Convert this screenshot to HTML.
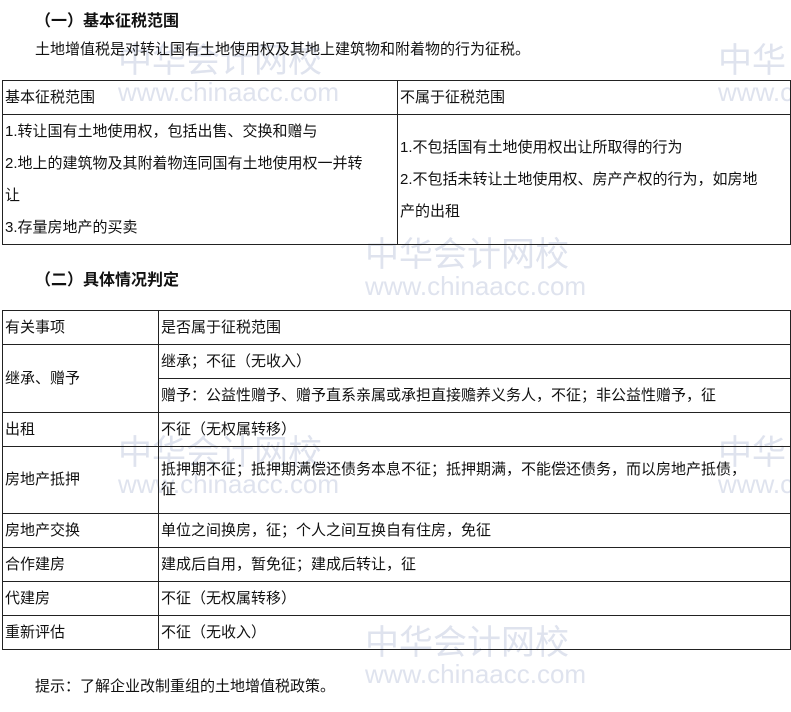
<!DOCTYPE html>
<html><head><meta charset="utf-8"><style>
body{margin:0;width:791px;height:712px;background:#fff;font-family:"Liberation Sans","Noto Sans CJK SC",sans-serif;font-size:15px;color:#111;position:relative;overflow:hidden}
.a{position:absolute;white-space:nowrap}
.wm{position:absolute;color:#dfe3ee;font-size:34px;white-space:nowrap;line-height:1}
.wm2{position:absolute;color:#dfe3ee;font-size:26px;white-space:nowrap;line-height:1}
table{position:absolute;border-collapse:collapse;left:2px}
td{border:1px solid #222;padding:0 2px;vertical-align:middle;line-height:20px;background:transparent}
</style></head><body>
<div class="wm" style="left:118px;top:44px">中华会计网校</div><div class="wm2" style="left:118px;top:79px">www.chinaacc.com</div>
<div class="wm" style="left:718px;top:44px">中华</div><div class="wm2" style="left:718px;top:79px">www.c</div>
<div class="wm" style="left:365px;top:238px">中华会计网校</div><div class="wm2" style="left:365px;top:273px">www.chinaacc.com</div>
<div class="wm" style="left:118px;top:436px">中华会计网校</div><div class="wm2" style="left:118px;top:471px">www.chinaacc.com</div>
<div class="wm" style="left:718px;top:436px">中华</div><div class="wm2" style="left:718px;top:471px">www.c</div>
<div class="wm" style="left:365px;top:626px">中华会计网校</div><div class="wm2" style="left:365px;top:661px">www.chinaacc.com</div>
<div class="a" style="left:35px;top:7px;font-weight:bold;font-size:16px">（一）基本征税范围</div>
<div class="a" style="left:35px;top:38px">土地增值税是对转让国有土地使用权及其地上建筑物和附着物的行为征税。</div>
<table style="top:80px;width:789px">
<tr style="height:34px"><td style="width:390px">基本征税范围</td><td>不属于征税范围</td></tr>
<tr style="height:130px"><td style="line-height:32px">1.转让国有土地使用权，包括出售、交换和赠与<br>2.地上的建筑物及其附着物连同国有土地使用权一并转<br>让<br>3.存量房地产的买卖</td><td style="line-height:32px">1.不包括国有土地使用权出让所取得的行为<br>2.不包括未转让土地使用权、房产产权的行为，如房地<br>产的出租</td></tr>
</table>
<div class="a" style="left:35px;top:266px;font-weight:bold;font-size:16px">（二）具体情况判定</div>
<table style="top:310px;width:789px">
<tr style="height:34px"><td style="width:151px">有关事项</td><td>是否属于征税范围</td></tr>
<tr style="height:34px"><td rowspan="2">继承、赠予</td><td>继承；不征（无收入）</td></tr>
<tr style="height:34px"><td>赠予：公益性赠予、赠予直系亲属或承担直接赡养义务人，不征；非公益性赠予，征</td></tr>
<tr style="height:34px"><td>出租</td><td>不征（无权属转移）</td></tr>
<tr style="height:67px"><td>房地产抵押</td><td>抵押期不征；抵押期满偿还债务本息不征；抵押期满，不能偿还债务，而以房地产抵债，<br>征</td></tr>
<tr style="height:34px"><td>房地产交换</td><td>单位之间换房，征；个人之间互换自有住房，免征</td></tr>
<tr style="height:34px"><td>合作建房</td><td>建成后自用，暂免征；建成后转让，征</td></tr>
<tr style="height:34px"><td>代建房</td><td>不征（无权属转移）</td></tr>
<tr style="height:34px"><td>重新评估</td><td>不征（无收入）</td></tr>
</table>
<div class="a" style="left:35px;top:675px">提示：了解企业改制重组的土地增值税政策。</div>
</body></html>
